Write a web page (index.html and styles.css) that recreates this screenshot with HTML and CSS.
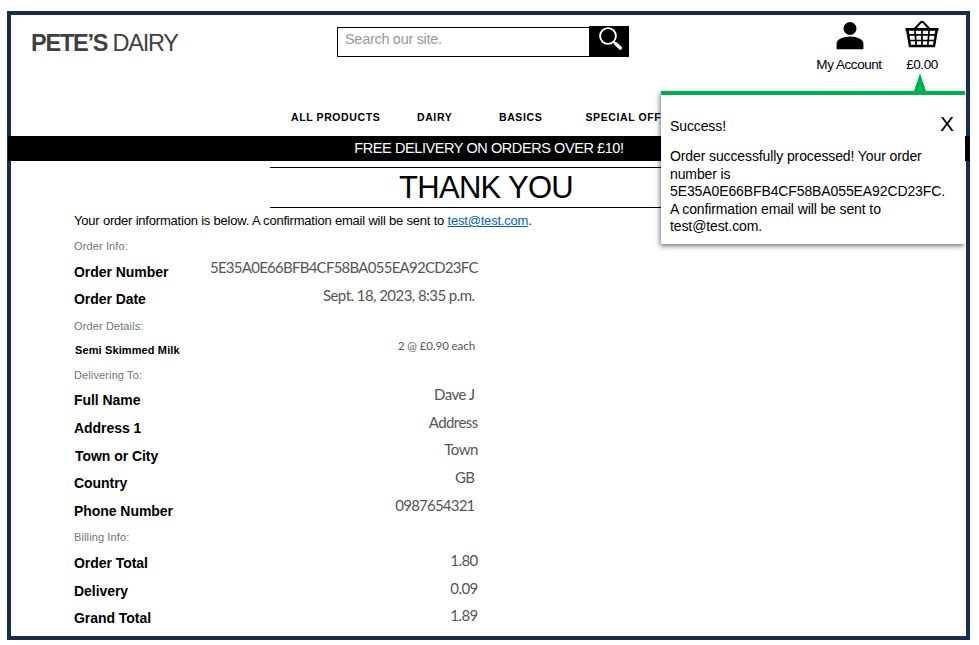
FILE: index.html
```html
<!DOCTYPE html>
<html lang="en">
<head>
<meta charset="utf-8">
<title>Pete's Dairy - Thank You</title>
<link rel="stylesheet" href="styles.css">
</head>
<body>
<div class="page">
  <header class="header">
    <div class="logo"><b>PETE’S</b> <span>DAIRY</span></div>
    <form class="search">
      <div class="field">Search our site.</div>
      <div class="search-btn">
        <svg width="40" height="31" viewBox="0 0 40 31"><circle cx="17" cy="10" r="7.900" fill="none" stroke="#fff" stroke-width="1.900"/><path d="M22.500 15.800l2.200 2" stroke="#fff" stroke-width="2"/><path d="M25 18l4.300 4" stroke="#fff" stroke-width="3.600" stroke-linecap="round"/></svg>
      </div>
    </form>
    <div class="account">
      <svg width="28" height="28" viewBox="0 0 28 28"><circle cx="14" cy="6.500" r="6.500"/><path d="M.6 27.300V21.500C.6 17.500 7 14.600 14 14.600S27.400 17.500 27.400 21.500V27.300Z"/></svg>
      <span>My Account</span>
    </div>
    <div class="basket">
      <svg width="34" height="28" viewBox="0 0 34 28" fill="none" stroke="#000"><path d="M9.500 9L15.500 2.500Q17 1.300 18.500 2.500L24.500 9" stroke-width="2"/><path d="M.5 9.300H33.500" stroke-width="2.800"/><path d="M2.200 9.500L5 26H29L31.800 9.500" stroke-width="2.500"/><path d="M3.500 14.800H30.500M4.500 20.500H29.500M9.800 9.500L11.300 26M17 9.500V26M24.200 9.500L22.700 26" stroke-width="1.700"/></svg>
      <span>£0.00</span>
    </div>
  </header>
  <nav class="nav">
    <span class="n1">ALL PRODUCTS</span><span class="n2">DAIRY</span><span class="n3">BASICS</span><span class="n4">SPECIAL OFFERS</span>
  </nav>
  <div class="banner"><span>FREE DELIVERY ON ORDERS OVER £10!</span></div>
  <h1 class="title"><span>THANK YOU</span></h1>
  <main class="order">
    <p class="intro">Your order information is below. A confirmation email will be sent to <a>test@test.com</a>.</p>
    <h2>Order Info:</h2>
    <div class="row r27 up5"><b>Order Number</b><span class="number">5E35A0E66BFB4CF58BA055EA92CD23FC</span></div>
    <div class="row r27 up4"><b>Order Date</b><span class="in">Sept. 18, 2023, 8:35 p.m.</span></div>
    <h2 class="r24">Order Details:</h2>
    <div class="row r25 up4 item"><b>Semi Skimmed Milk</b><span class="in">2 @ £0.90 each</span></div>
    <h2 class="r25">Delivering To:</h2>
    <div class="row r28 up6"><b>Full Name</b><span class="in">Dave J</span></div>
    <div class="row r28 up6"><b>Address 1</b><span>Address</span></div>
    <div class="row r27 up7"><b class="town">Town or City</b><span>Town</span></div>
    <div class="row r28 up6"><b>Country</b><span class="in">GB</span></div>
    <div class="row r26 up6"><b>Phone Number</b><span class="in phone">0987654321</span></div>
    <h2>Billing Info:</h2>
    <div class="row r28 up3"><b>Order Total</b><span>1.80</span></div>
    <div class="row r27 up3"><b>Delivery</b><span>0.09</span></div>
    <div class="row r20 up3"><b>Grand Total</b><span>1.89</span></div>
  </main>
  <aside class="toast">
    <div class="toast-head"><span>Success!</span><span class="close">X</span></div>
    <p>Order successfully processed! Your order<br>number is<br>5E35A0E66BFB4CF58BA055EA92CD23FC.<br>A confirmation email will be sent to<br>test@test.com.</p>
  </aside>
</div>
</body>
</html>
```
FILE: styles.css
```css
* { box-sizing: border-box; }
body {
  margin: 0;
  height: 645px;
  padding: 11px 9px 5px 7px;
  overflow: hidden;
  background: #fff;
  color: #000;
  font-family: "Liberation Sans", Arial, sans-serif;
}
.page { position: relative; width: 963px; height: 629px; border: 4px solid #172c51; }

.header { display: flex; height: 89px; padding-left: 20px; font-size: 14px; }
.logo { width: 306px; padding-top: 14px; font-size: 23.500px; line-height: 28px; letter-spacing: -1.230px; color: #404040; white-space: nowrap; }
.search { display: flex; width: 292px; height: 31px; margin: 11px 0 0; }
.field { width: 252px; height: 30px; margin-top: 1px; padding: 3px 0 0 7px; border: 1px solid #000; border-right: 0; font-size: 14.500px; line-height: 16px; letter-spacing: -.3px; color: #999; }
.search-btn { width: 40px; height: 31px; background: #000; }
.search-btn svg { display: block; margin-left: 2px; }
.account, .basket { display: flex; flex-direction: column; align-items: center; padding-top: 7px; }
.account { width: 66px; margin-left: 187px; }
.basket { width: 34px; margin-left: 23px; padding-top: 5px; }
.account span, .basket span { margin-top: 6px; line-height: 18px; font-size: 13.500px; letter-spacing: -.45px; white-space: nowrap; }
.account svg { margin-left: 1px; }
.basket span { margin-top: 8px; }

.nav { display: flex; height: 32px; padding: 6px 0 0 280px; font-size: 10.500px; font-weight: 700; line-height: 14px; letter-spacing: .6px; white-space: nowrap; }
.n1 { width: 126px; }
.n2 { width: 82px; }
.n3 { width: 86.500px; }
.n4 { width: 75.500px; overflow: hidden; }

.banner { height: 25px; margin: 0 -4px 0 -3px; background: #000; color: #fff; font-size: 14.500px; line-height: 25px; text-align: center; letter-spacing: -.42px; }
.title { width: 432px; height: 41px; margin: 6px 0 0 259px; border: solid #000; border-width: 1px 0; font-size: 31px; line-height: 40px; font-weight: 400; text-align: center; letter-spacing: -.7px; }

.order { width: 404px; margin-left: 63px; }
.intro { margin: 4px 0 0; height: 24px; font-size: 13px; line-height: 18px; white-space: nowrap; letter-spacing: -.2px; }
.intro a { color: #0563c1; text-decoration: underline; }
.order h2 { margin: 0; height: 26px; font-size: 11px; line-height: 20px; font-weight: 400; letter-spacing: .12px; color: #6c757d; }
.row { display: flex; justify-content: space-between; line-height: 20px; white-space: nowrap; }
.row b { font-size: 14px; letter-spacing: -.05px; }
.row .town { margin-left: 1px; }
.row span { margin-right: .3px; font-family: Lato, sans-serif; font-size: 15px; letter-spacing: -.55px; color: #555; }
.row .number { letter-spacing: -.74px; }
.row .in { margin-right: 3.500px; }
.row .phone { letter-spacing: -.78px; }
.item b { font-size: 11px; margin-left: 1px; letter-spacing: .12px; }
.item .in { margin-right: 3px; font-size: 11.500px; letter-spacing: -.08px; }
.order .r20 { height: 20px; }
.order .r24 { height: 24px; }
.order .r25 { height: 25px; }
.order .r26 { height: 26px; }
.order .r27 { height: 27px; }
.order .r28 { height: 28px; }
.up3 span { margin-top: -3px; }
.up4 span { margin-top: -4px; }
.up5 span { margin-top: -5px; }
.up6 span { margin-top: -6px; }
.up7 span { margin-top: -7px; }

.toast { position: absolute; left: 650px; top: 76px; width: 304px; height: 153px; padding: 23px 9px 0; border-top: 4px solid #00b050; background: #fff; box-shadow: -1px 2px 5px rgba(0, 0, 0, .55); clip-path: inset(-20px 0 -10px -10px); font-size: 14px; letter-spacing: -.11px; }
.toast::before { content: ""; position: absolute; right: 39px; top: -22px; border: solid transparent; border-width: 0 6px 18px; border-bottom-color: #00b050; }
.toast-head { display: flex; justify-content: space-between; height: 30px; line-height: 17px; }
.close { margin: -3px 2px 0 0; font-size: 21px; }
.toast p { margin: 0; line-height: 17.500px; white-space: nowrap; }
```
